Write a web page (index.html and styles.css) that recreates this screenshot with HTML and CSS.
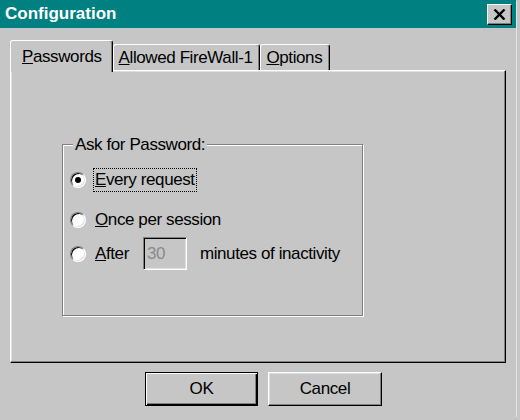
FILE: index.html
```html
<!DOCTYPE html>
<html lang="en">
<head>
  <meta charset="UTF-8">
  <title>Configuration</title>
  <link rel="stylesheet" href="styles.css">
</head>
<body>
  <div class="window">
    <div class="titlebar">
      <span class="title">Configuration</span>
      <button class="close">
        <svg width="13" height="11" viewBox="0 0 13 11">
          <path d="M1.5 0.5 L11.5 10.5 M11.5 0.5 L1.5 10.5" stroke="#000" stroke-width="2.4" fill="none"/>
        </svg>
      </button>
    </div>

    <div class="content">
      <div class="tabs">
        <div class="tab active"><u>P</u>asswords</div>
        <div class="tab"><u>A</u>llowed FireWall-1</div>
        <div class="tab"><u>O</u>ptions</div>
      </div>

      <div class="panel">
        <div class="group">
          <div class="legend">Ask for Password:</div>
          <div class="row row-every">
            <span class="radio checked"></span>
            <span class="label focus"><u>E</u>very request</span>
          </div>
          <div class="row row-once">
            <span class="radio"></span>
            <span class="label"><u>O</u>nce per session</span>
          </div>
          <div class="row row-after">
            <span class="radio"></span>
            <span class="label"><u>A</u>fter</span>
            <span class="edit">30</span>
            <span class="suffix">minutes of inactivity</span>
          </div>
        </div>
      </div>
    </div>

    <div class="buttons">
      <button class="btn default">OK</button>
      <button class="btn">Cancel</button>
    </div>
  </div>
</body>
</html>
```

FILE: styles.css
```css
* {
  margin: 0;
  padding: 0;
  box-sizing: border-box;
}

body {
  font-family: "Liberation Sans", Arial, sans-serif;
  font-size: 17px;
  letter-spacing: -0.4px;
  color: #000;
  background: #c6c6c6;
}

.window {
  width: 516px;
  height: 417px;
  background: #c6c6c6;
  box-shadow: 1px 1px 0 #e4e4e4;
}

.titlebar {
  height: 28px;
  background: #008080;
  display: flex;
  align-items: center;
  justify-content: space-between;
  padding: 0 4px 0 5px;
}

.title {
  color: #fff;
  font-weight: bold;
  font-size: 17px;
  letter-spacing: 0;
}

.close {
  width: 25px;
  height: 21px;
  background: #c6c6c6;
  border: 1px solid;
  border-color: #fff #000 #000 #fff;
  box-shadow: inset -1px -1px 0 #808080;
  display: flex;
  align-items: center;
  justify-content: center;
}

.content {
  padding: 12px 10px 0 10px;
}

/* tabs */
.tabs {
  display: flex;
  align-items: flex-end;
  height: 30px;
}

.tab {
  height: 26px;
  line-height: 25px;
  padding: 0 7px 0 5px;
  background: #c6c6c6;
  border-top: 1px solid #fff;
  border-left: 1px solid #fff;
  border-right: 1px solid #000;
  border-radius: 3px 3px 0 0;
  box-shadow: inset -1px 0 0 #808080;
  white-space: nowrap;
}

.tab.active {
  height: 32px;
  line-height: 31px;
  margin-bottom: -2px;
  padding: 0 10px 0 11px;
  position: relative;
  z-index: 1;
}

.panel {
  width: 496px;
  height: 293px;
  border: 1px solid;
  border-color: #fff #000 #000 #fff;
  box-shadow: inset -1px -1px 0 #808080, inset 1px 1px 0 #dfdfdf;
  padding: 73px 0 0 51px;
}

/* group box */
.group {
  width: 301px;
  height: 172px;
  border: 1px solid #808080;
  box-shadow: 1px 1px 0 #fff, inset 1px 1px 0 #fff;
  display: flex;
  flex-direction: column;
  align-items: flex-start;
  padding-left: 7px;
}

.legend {
  margin: -10px 0 0 3px;
  padding: 0 2px;
  height: 20px;
  line-height: 20px;
  background: #c6c6c6;
}

.row {
  display: flex;
  align-items: center;
  height: 24px;
}

.row-every {
  margin-top: 13px;
}

.row-once {
  margin-top: 16px;
}

.row-after {
  margin-top: 5px;
  height: 33px;
}

.radio {
  width: 16px;
  height: 16px;
  border-radius: 50%;
  background: #fff;
  border: 1px solid;
  border-color: #808080 #fff #fff #808080;
  box-shadow: inset 1px 1px 0 #000, inset -1px -1px 0 #dfdfdf;
  display: flex;
  align-items: center;
  justify-content: center;
}

.radio.checked::after {
  content: "";
  width: 6px;
  height: 6px;
  border-radius: 50%;
  background: #000;
}

.label {
  margin-left: 9px;
}

.label.focus {
  margin-left: 7px;
  padding: 0 1px;
  height: 24px;
  line-height: 22px;
  border: 1px dotted #000;
}

.edit {
  width: 44px;
  height: 33px;
  margin-left: 14px;
  padding-left: 3px;
  line-height: 31px;
  color: #8a8a8a;
  border: 1px solid;
  border-color: #808080 #fff #fff #808080;
  box-shadow: inset 1px 1px 0 #000, inset -1px -1px 0 #dfdfdf;
}

.suffix {
  margin-left: 13px;
}

/* bottom buttons */
.buttons {
  display: flex;
  gap: 10px;
  padding: 9px 0 0 145px;
}

.btn {
  width: 114px;
  height: 34px;
  font-family: inherit;
  font-size: 17px;
  letter-spacing: -0.4px;
  background: #c6c6c6;
  color: #000;
  border: 1px solid;
  border-color: #fff #000 #000 #fff;
  box-shadow: inset -1px -1px 0 #808080, inset 1px 1px 0 #dfdfdf;
}

.btn.default {
  width: 113px;
  border-color: #000;
  box-shadow: inset 1px 1px 0 #fff, inset -1px -1px 0 #000, inset -2px -2px 0 #808080;
}
```
